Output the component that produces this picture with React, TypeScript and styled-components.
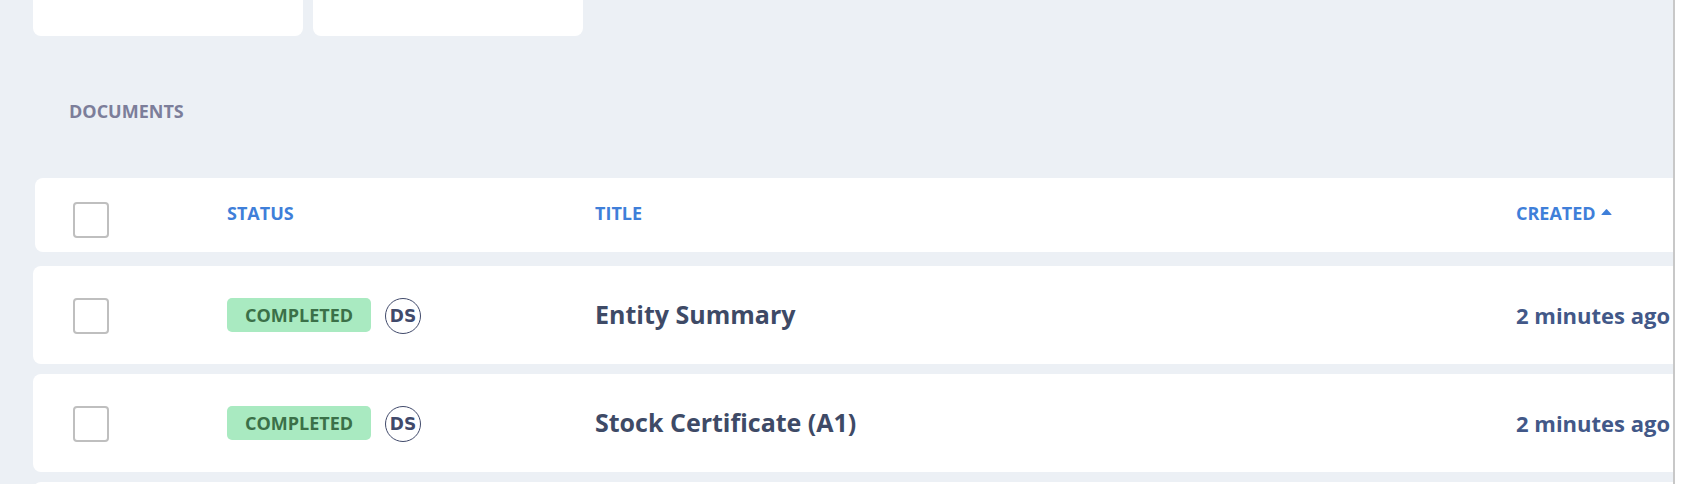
import React from "react";
import styled, { createGlobalStyle } from "styled-components";

const GlobalStyle = createGlobalStyle`
  *, *::before, *::after { box-sizing: border-box; }
  body {
    margin: 0;
    background: #ffffff;
    font-family: "Open Sans", "Noto Sans", sans-serif;
  }
`;

const Page = styled.div`
  height: 100vh;
  padding-right: 10px;
  overflow: hidden;
`;

const Panel = styled.main`
  height: 100%;
  padding-left: 33px;
  border-right: 2px solid #c8c8c8;
  background: #ecf0f5;
  overflow: hidden;
`;

const Cards = styled.div`
  display: flex;
  gap: 10px;
`;

const Card = styled.div`
  width: 270px;
  height: 36px;
  border-radius: 0 0 8px 8px;
  background: #ffffff;
`;

const SectionTitle = styled.h2`
  margin: 0;
  padding: 63px 36px 55px;
  font-size: 18px;
  line-height: 24px;
  font-weight: 700;
  text-transform: uppercase;
  color: #7c7e9a;
`;

const Table = styled.table`
  display: block;
`;

const Head = styled.thead`
  display: block;
  padding: 0 0 14px 2px;
`;

const Body = styled.tbody`
  display: flex;
  flex-direction: column;
  gap: 10px;
`;

const Row = styled.tr<{ $head?: boolean }>`
  display: grid;
  grid-template-columns: 154px 368px minmax(0, 1fr) 157px;
  height: ${(p) => (p.$head ? 74 : 98)}px;
  padding-left: ${(p) => (p.$head ? 38 : 40)}px;
  border-radius: 8px 0 0 8px;
  background: #ffffff;
`;

const HeadCell = styled.th`
  padding: 19px 0 0;
  text-align: left;
`;

const CheckCell = styled.td<{ $head?: boolean }>`
  padding: ${(p) => (p.$head ? 24 : 32)}px 0 0;
`;

const StatusCell = styled.td`
  display: flex;
  align-items: flex-start;
  gap: 14px;
  padding: 32px 0 0;
`;

const TitleCell = styled.td`
  padding: 32px 0 0;
  font-size: 25px;
  line-height: 32px;
  font-weight: 700;
  color: #3e4a66;
`;

const DateCell = styled.td`
  padding: 33px 0 0;
  font-size: 22px;
  line-height: 32px;
  font-weight: 700;
  white-space: nowrap;
  color: #425888;
`;

const Checkbox = styled.input`
  appearance: none;
  display: block;
  width: 36px;
  height: 36px;
  margin: 0;
  border: 2px solid #bfbfbf;
  border-radius: 4px;
  background: #ffffff;

  &:checked {
    background: #3f7fd9;
  }
`;

const SortButton = styled.button`
  display: flex;
  align-items: center;
  gap: 5px;
  margin: 0;
  padding: 0;
  border: 0;
  background: none;
  font: inherit;
  font-size: 18px;
  line-height: 32px;
  font-weight: 700;
  text-transform: uppercase;
  color: #3f7fd9;
  cursor: pointer;
`;

const Badge = styled.span`
  width: 144px;
  border-radius: 5px;
  background: #a9eac1;
  font-size: 18px;
  line-height: 34px;
  font-weight: 700;
  text-align: center;
  text-transform: uppercase;
  color: #3b7048;
`;

const Signer = styled.span`
  width: 36px;
  height: 36px;
  border: 1px solid #414a6b;
  border-radius: 50%;
  font-family: "DejaVu Sans", sans-serif;
  font-size: 17px;
  line-height: 34px;
  font-weight: 700;
  text-align: center;
  color: #414a6b;
`;

const documents = ["Entity Summary", "Stock Certificate (A1)"];

export default function App() {
  return (
    <Page>
      <GlobalStyle />
      <Panel>
        <Cards>
          <Card />
          <Card />
        </Cards>
        <SectionTitle>Documents</SectionTitle>
        <Table>
          <Head>
            <Row $head>
              <CheckCell $head>
                <Checkbox type="checkbox" aria-label="Select all documents" />
              </CheckCell>
              <HeadCell>
                <SortButton type="button">Status</SortButton>
              </HeadCell>
              <HeadCell>
                <SortButton type="button">Title</SortButton>
              </HeadCell>
              <HeadCell aria-sort="ascending">
                <SortButton type="button">
                  Created
                  <svg width="11" height="10" viewBox="0 0 11 10" aria-hidden="true">
                    <path d="M0.8 7Q0 7 0.6 6.2L4.9 1.4Q5.5 0.8 6.1 1.4L10.4 6.2Q11 7 10.2 7Z" fill="currentColor" />
                  </svg>
                </SortButton>
              </HeadCell>
            </Row>
          </Head>
          <Body>
            {documents.map((title) => (
              <Row key={title}>
                <CheckCell>
                  <Checkbox type="checkbox" aria-label={`Select ${title}`} />
                </CheckCell>
                <StatusCell>
                  <Badge>Completed</Badge>
                  <Signer>DS</Signer>
                </StatusCell>
                <TitleCell>{title}</TitleCell>
                <DateCell>2 minutes ago</DateCell>
              </Row>
            ))}
            <Row />
          </Body>
        </Table>
      </Panel>
    </Page>
  );
}
